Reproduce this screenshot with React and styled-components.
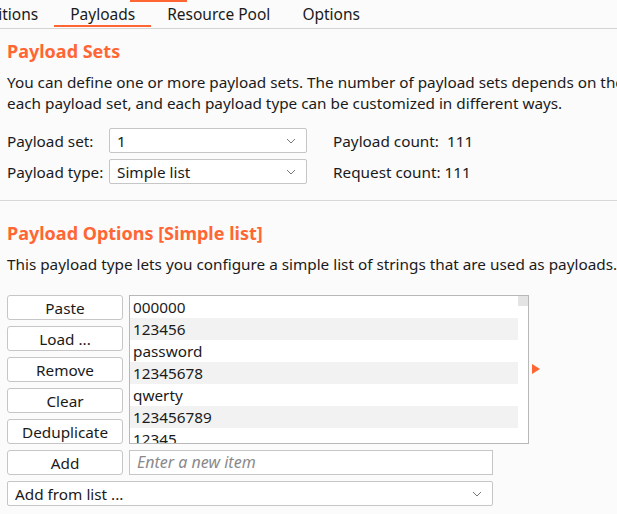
import React from 'react';
import styled, { createGlobalStyle } from 'styled-components';

const GlobalStyle = createGlobalStyle`
  html, body { margin: 0; padding: 0; background: #fbfbfb; }
  body { font-family: "Noto Sans", "Open Sans", sans-serif; color: #1a1a1a; overflow: hidden; }
`;

const ORANGE = '#ff6633';
const TEXT = '15.3px';

const Page = styled.div`
  width: 617px;
  height: 514px;
  overflow: hidden;
  position: relative;
`;

const TopMark = styled.div`
  position: absolute;
  top: 0;
  left: 130px;
  width: 57px;
  height: 2px;
  background: ${ORANGE};
`;

const TabBar = styled.div`
  display: flex;
  height: 28px;
  border-bottom: 1px solid #d4d4d4;
  margin-left: -44px;
  background: #fbfbfb;
`;

const Tab = styled.div`
  font-size: 15.5px;
  padding: 0 16px;
  line-height: 28px;
  white-space: nowrap;
  border-bottom: 2px solid ${p => (p.$active ? ORANGE : 'transparent')};
  height: 27px;
  box-sizing: border-box;
`;

const Section = styled.div`
  padding: 10px 7px 16px;
  border-bottom: ${p => (p.$line ? '1px solid #d8d8d8' : 'none')};
`;

const Heading = styled.h2`
  margin: ${p => (p.$gap ? '10px 0 0' : '0')};
  font-size: 18px;
  font-weight: 700;
  color: ${ORANGE};
  line-height: 25px;
`;

const Para = styled.p`
  margin: 8px 0 0;
  font-size: ${TEXT};
  line-height: 21px;
  white-space: nowrap;
`;

const FormGrid = styled.div`
  display: grid;
  grid-template-columns: 102px 198px auto;
  row-gap: 6px;
  margin-top: 14px;
  align-items: center;
`;

const Label = styled.span`
  font-size: ${TEXT};
`;

const CountLabel = styled.span`
  font-size: ${TEXT};
  padding-left: 26px;
  white-space: pre;
`;

const SelectBox = styled.div`
  height: 25px;
  box-sizing: border-box;
  border: 1px solid #c6c6c6;
  border-radius: 2px;
  background: #fff;
  display: flex;
  align-items: center;
  justify-content: space-between;
  padding: 0 10px 0 7px;
  font-size: ${TEXT};
  width: ${p => p.$w || 'auto'};
`;

const Chevron = () => (
  <svg width="10" height="6" viewBox="0 0 10 6">
    <path d="M1 1l4 4 4-4" fill="none" stroke="#777" strokeWidth="1" />
  </svg>
);

const Options = styled.div`
  display: flex;
  gap: 6px;
  margin-top: 19px;
`;

const ButtonCol = styled.div`
  display: flex;
  flex-direction: column;
  gap: 6px;
  padding-top: 1px;
`;

const Button = styled.div`
  width: 116px;
  height: 25px;
  box-sizing: border-box;
  border: 1px solid #c6c6c6;
  border-radius: 3px;
  background: #fff;
  font-size: ${TEXT};
  display: flex;
  align-items: center;
  justify-content: center;
`;

const ListWrap = styled.div`
  display: flex;
  align-items: center;
  gap: 3px;
`;

const ListBox = styled.div`
  width: 400px;
  height: 149px;
  box-sizing: border-box;
  border: 1px solid #b8b8b8;
  background: #fff;
  display: flex;
  overflow: hidden;
`;

const Rows = styled.div`
  flex: 1;
  display: flex;
  flex-direction: column;
`;

const Row = styled.div`
  height: 22px;
  flex-shrink: 0;
  line-height: 22px;
  padding-left: 3px;
  font-size: ${TEXT};
  background: ${p => (p.$odd ? '#f2f2f2' : '#fff')};
`;

const ScrollTrack = styled.div`
  width: 10px;
  background: #fff;
`;

const Thumb = styled.div`
  height: 10px;
  background: #e4e4e4;
`;

const Arrow = styled.div`
  width: 0;
  height: 0;
  border-top: 5px solid transparent;
  border-bottom: 5px solid transparent;
  border-left: 8px solid ${ORANGE};
`;

const AddRow = styled.div`
  display: flex;
  gap: 6px;
  margin-top: 6px;
`;

const Input = styled.div`
  width: 364px;
  height: 25px;
  box-sizing: border-box;
  border: 1px solid #c6c6c6;
  background: #fff;
  font-size: 16px;
  font-style: italic;
  color: #8a8a8a;
  padding-left: 7px;
  line-height: 23px;
`;

const items = ['000000', '123456', 'password', '12345678', 'qwerty', '123456789', '12345'];

export default function App() {
  return (
    <Page>
      <GlobalStyle />
      <TopMark />
      <TabBar>
        <Tab>Positions</Tab>
        <Tab $active>Payloads</Tab>
        <Tab>Resource Pool</Tab>
        <Tab>Options</Tab>
      </TabBar>
      <Section $line>
        <Heading>Payload Sets</Heading>
        <Para>
          You can define one or more payload sets. The number of payload sets depends on the attack type defined in the Positions tab.
          <br />
          each payload set, and each payload type can be customized in different ways.
        </Para>
        <FormGrid>
          <Label>Payload set:</Label>
          <SelectBox>1<Chevron /></SelectBox>
          <CountLabel>Payload count:  111</CountLabel>
          <Label>Payload type:</Label>
          <SelectBox>Simple list<Chevron /></SelectBox>
          <CountLabel>Request count: 111</CountLabel>
        </FormGrid>
      </Section>
      <Section>
        <Heading $gap>Payload Options [Simple list]</Heading>
        <Para>This payload type lets you configure a simple list of strings that are used as payloads.</Para>
        <Options>
          <ButtonCol>
            <Button>Paste</Button>
            <Button>Load ...</Button>
            <Button>Remove</Button>
            <Button>Clear</Button>
            <Button>Deduplicate</Button>
          </ButtonCol>
          <ListWrap>
            <ListBox>
              <Rows>
                {items.map((it, i) => (
                  <Row key={it} $odd={i % 2 === 1}>{it}</Row>
                ))}
              </Rows>
              <ScrollTrack><Thumb /></ScrollTrack>
            </ListBox>
            <Arrow />
          </ListWrap>
        </Options>
        <AddRow>
          <Button>Add</Button>
          <Input>Enter a new item</Input>
        </AddRow>
        <AddRow>
          <SelectBox $w="486px">Add from list ...<Chevron /></SelectBox>
        </AddRow>
      </Section>
    </Page>
  );
}
